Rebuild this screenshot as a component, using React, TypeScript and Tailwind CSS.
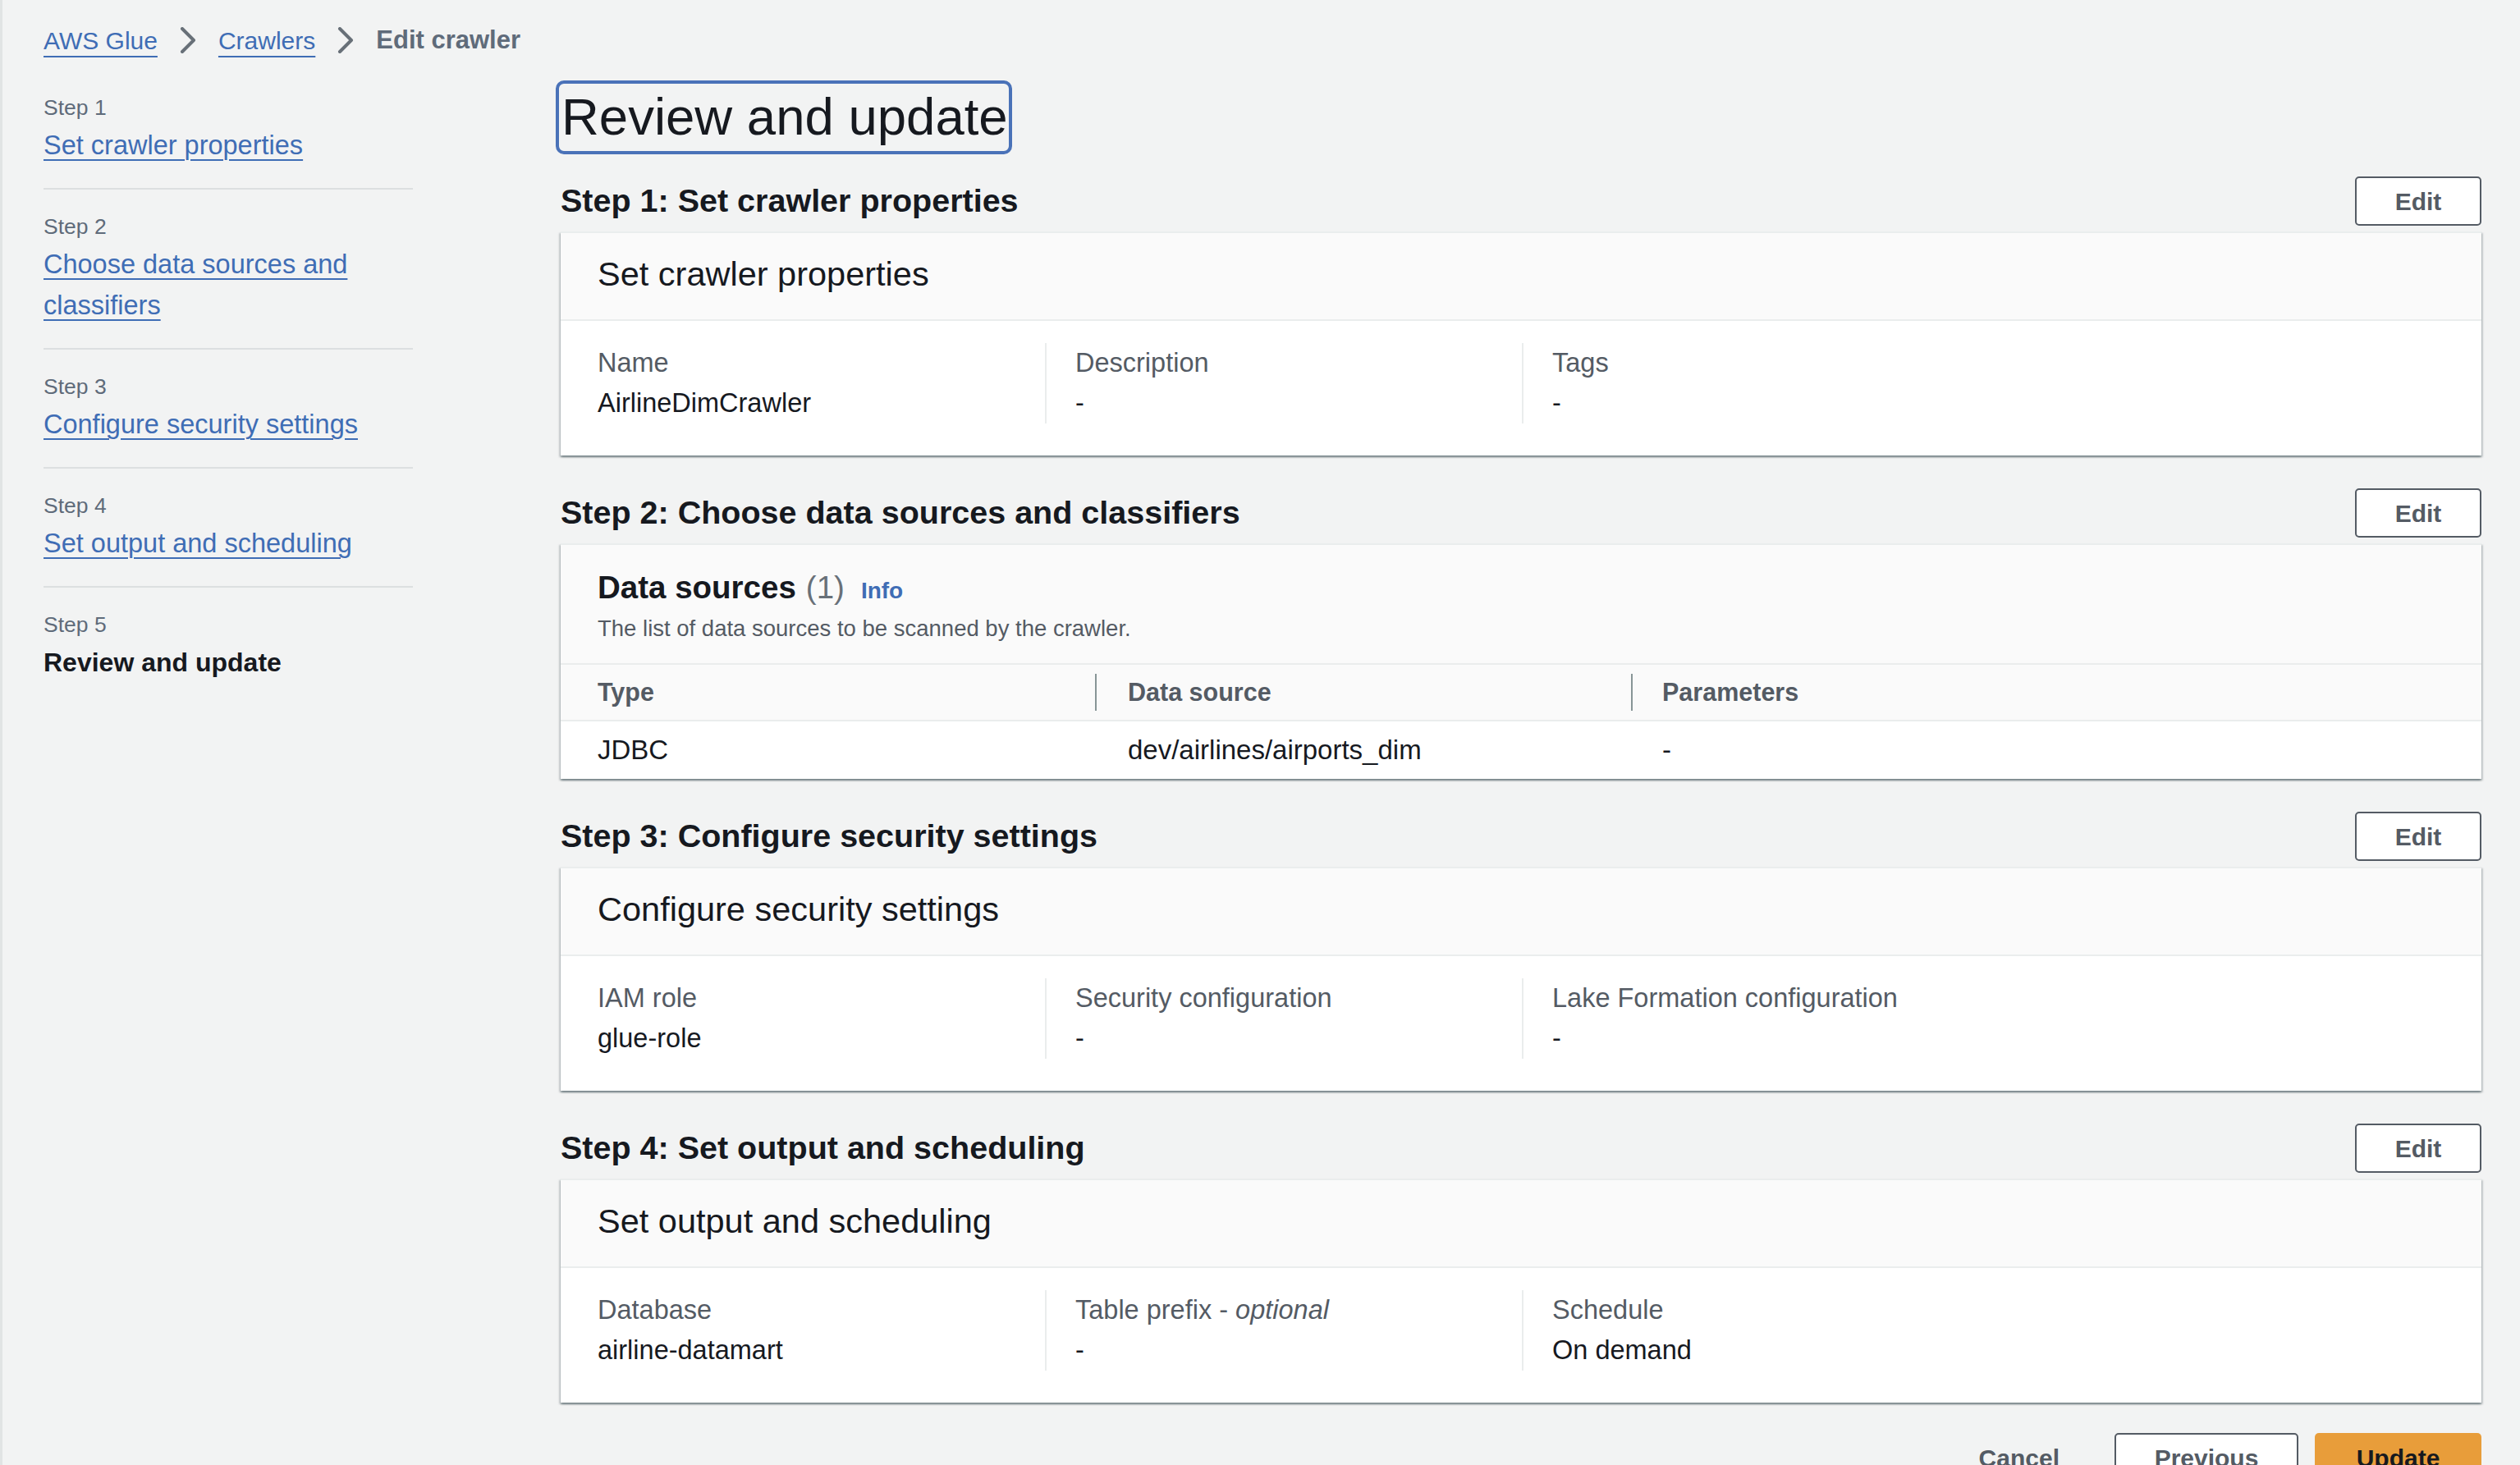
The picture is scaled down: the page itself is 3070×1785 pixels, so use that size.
import type { ReactNode } from "react";

const font = { fontFamily: '"Liberation Sans", Arial, sans-serif' };

const navSteps = [
  { step: "Step 1", label: ["Set crawler properties"] },
  { step: "Step 2", label: ["Choose data sources and", "classifiers"] },
  { step: "Step 3", label: ["Configure security settings"] },
  { step: "Step 4", label: ["Set output and scheduling"] },
];

function Chevron() {
  return (
    <svg width="20" height="32" viewBox="0 0 20 32" className="mx-[27px]" aria-hidden="true">
      <path d="M3 2 L17 16 L3 30" fill="none" stroke="#687078" strokeWidth="4" strokeLinecap="round" strokeLinejoin="round" />
    </svg>
  );
}

function EditButton() {
  return (
    <button className="flex h-[60px] w-[154px] items-center justify-center rounded-[5px] border-2 border-[#545b64] bg-white text-[30px] font-bold text-[#545b64]">
      Edit
    </button>
  );
}

function Section({ title, children }: { title: string; children: ReactNode }) {
  return (
    <section>
      <div className="flex h-[60px] items-center justify-between">
        <h2 className="text-[39.5px] font-bold leading-none text-[#16191f]">{title}</h2>
        <EditButton />
      </div>
      <div className="mt-[7px] border-t-2 border-[#eaeded] bg-white shadow-[0_2px_2px_0_rgba(0,28,36,0.35),2px_2px_2px_0_rgba(0,28,36,0.15),-2px_2px_2px_0_rgba(0,28,36,0.15)]">
        {children}
      </div>
    </section>
  );
}

type Pair = { label: ReactNode; value: string };

function KeyValueBox({ title, items }: { title: string; items: Pair[] }) {
  return (
    <>
      <div className="flex h-[107px] items-center border-b-2 border-[#eaeded] bg-[#fafafa] px-[45px] pb-[4px]">
        <h3 className="text-[41.5px] font-normal text-[#16191f]">{title}</h3>
      </div>
      <div className="flex px-[45px] pb-[39px] pt-[27px]">
        {items.map((item, i) => (
          <div
            key={i}
            className={
              i === 0
                ? "w-[545px]"
                : "w-[581px] border-l-2 border-[#eaeded] pl-[35px]"
            }
          >
            <div className="text-[32.5px] leading-[49px] text-[#545b64]">{item.label}</div>
            <div className="text-[32.5px] leading-[49px] text-[#16191f]">{item.value}</div>
          </div>
        ))}
      </div>
    </>
  );
}

function DataSourcesBox() {
  const cols = ["Type", "Data source", "Parameters"];
  const row = ["JDBC", "dev/airlines/airports_dim", "-"];
  const cellClass = (i: number) =>
    i === 0 ? "w-[653px] pl-[45px]" : i === 1 ? "w-[653px] pl-[38px]" : "flex-1 pl-[36px]";
  return (
    <>
      <div className="border-b-2 border-[#eaeded] bg-[#fafafa] px-[45px] pb-[24px] pt-[28px]">
        <div className="flex items-baseline leading-[48px]">
          <h3 className="text-[38.5px] font-bold text-[#16191f]">Data sources</h3>
          <span className="ml-[12px] text-[38.5px] text-[#687078]">(1)</span>
          <span className="ml-[20px] text-[28px] font-bold text-[#3f6db5]">Info</span>
        </div>
        <p className="mt-[4px] text-[27.5px] leading-[36px] text-[#545b64]">
          The list of data sources to be scanned by the crawler.
        </p>
      </div>
      <div className="flex h-[69px] items-center border-b-2 border-[#eaeded] bg-[#fafafa]">
        {cols.map((c, i) => (
          <div key={c} className={`flex h-full items-center justify-between ${cellClass(i)}`}>
            <span className="text-[30.5px] font-bold text-[#545b64]">{c}</span>
            {i < 2 ? <span className="h-[45px] w-[2px] bg-[#879596]" /> : null}
          </div>
        ))}
      </div>
      <div className="flex h-[70px] items-center">
        {row.map((v, i) => (
          <div key={i} className={`text-[33px] text-[#16191f] ${cellClass(i)}`}>
            {v}
          </div>
        ))}
      </div>
    </>
  );
}

export default function App() {
  return (
    <div
      style={font}
      className="h-[1785px] overflow-hidden border-l-[3px] border-[#e1e4e4] bg-[#f2f3f3] pl-[50px] pr-[47px]"
    >
      <nav className="flex h-[98px] items-center text-[30px]">
        <a className="text-[#3f6db5] underline decoration-2 underline-offset-[8px]">AWS Glue</a>
        <Chevron />
        <a className="text-[#3f6db5] underline decoration-2 underline-offset-[8px]">Crawlers</a>
        <Chevron />
        <span className="text-[31px] font-bold text-[#5f6b7a]">Edit crawler</span>
      </nav>

      <div className="flex">
        <aside className="w-[450px] shrink-0">
          <ul>
            {navSteps.map((s, i) => (
              <li
                key={s.step}
                className={`border-b-2 border-[#dcdfe0] pb-[27px] ${i === 0 ? "pt-[15px]" : "pt-[27px]"}`}
              >
                <div className="text-[26.5px] leading-[36px] text-[#5f6b7a]">{s.step}</div>
                <div className="mt-[3px] text-[32.5px] leading-[50px]">
                  {s.label.map((line) => (
                    <div key={line}>
                      <a className="text-[#3f6db5] underline decoration-2 underline-offset-[6px]">{line}</a>
                    </div>
                  ))}
                </div>
              </li>
            ))}
            <li className="pt-[27px]">
              <div className="text-[26.5px] leading-[36px] text-[#5f6b7a]">Step 5</div>
              <div className="mt-[3px] text-[32px] font-bold leading-[50px] text-[#16191f]">Review and update</div>
            </li>
          </ul>
        </aside>

        <main className="ml-[180px] flex-1">
          <h1 className="ml-[-6px] flex h-[90px] w-fit items-center rounded-[10px] border-[4px] border-[#4a72b8] pl-[3px] pr-[1px] text-[63.5px] font-normal text-[#16191f]">
            Review and update
          </h1>

          <div className="mt-[27px] flex flex-col gap-[40px]">
            <Section title="Step 1: Set crawler properties">
              <KeyValueBox
                title="Set crawler properties"
                items={[
                  { label: "Name", value: "AirlineDimCrawler" },
                  { label: "Description", value: "-" },
                  { label: "Tags", value: "-" },
                ]}
              />
            </Section>

            <Section title="Step 2: Choose data sources and classifiers">
              <DataSourcesBox />
            </Section>

            <Section title="Step 3: Configure security settings">
              <KeyValueBox
                title="Configure security settings"
                items={[
                  { label: "IAM role", value: "glue-role" },
                  { label: "Security configuration", value: "-" },
                  { label: "Lake Formation configuration", value: "-" },
                ]}
              />
            </Section>

            <Section title="Step 4: Set output and scheduling">
              <KeyValueBox
                title="Set output and scheduling"
                items={[
                  { label: "Database", value: "airline-datamart" },
                  {
                    label: (
                      <>
                        Table prefix - <i>optional</i>
                      </>
                    ),
                    value: "-",
                  },
                  { label: "Schedule", value: "On demand" },
                ]}
              />
            </Section>
          </div>

          <div className="mt-[37px] flex items-center justify-end gap-[20px]">
            <button className="flex h-[60px] items-center px-[47px] text-[30px] font-bold text-[#545b64]">Cancel</button>
            <button className="flex h-[60px] w-[224px] items-center justify-center rounded-[5px] border-2 border-[#545b64] bg-white text-[30px] font-bold text-[#545b64]">
              Previous
            </button>
            <button className="flex h-[60px] w-[203px] items-center justify-center rounded-[5px] bg-[#e89d3a] text-[30px] font-bold text-[#16191f]">
              Update
            </button>
          </div>
        </main>
      </div>
    </div>
  );
}
